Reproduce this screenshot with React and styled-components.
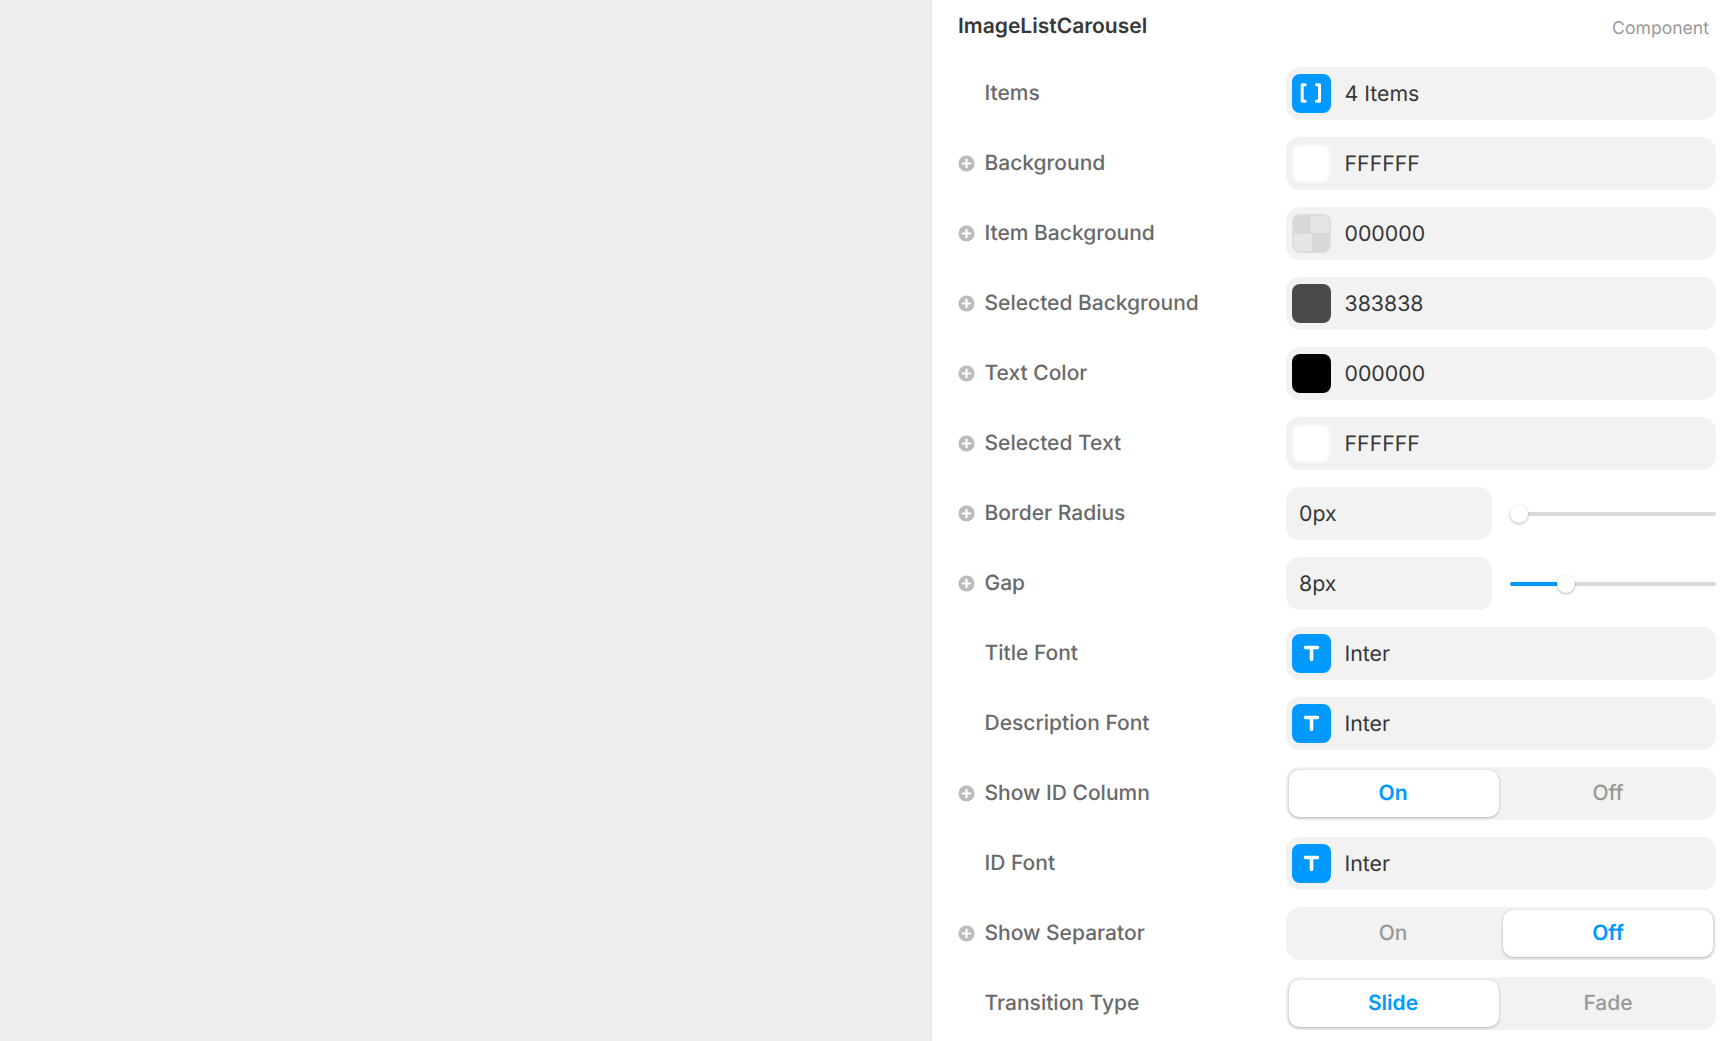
import styled, { createGlobalStyle } from "styled-components";

const GlobalStyle = createGlobalStyle`
  html, body {
    margin: 0;
    height: 100%;
    overflow: hidden;
    background: #eee;
    font-family: "Inter", "Liberation Sans", sans-serif;
    text-rendering: geometricPrecision;
  }
  #root { height: 100%; }
`;

const BLUE = "#0099ff";

const Page = styled.div`
  display: flex;
  height: 100vh;
`;

const Canvas = styled.div`
  flex: 1;
  background: #eee;
  border-right: 1px solid #e8e8e8;
`;

const Panel = styled.aside`
  width: 798px;
  box-sizing: border-box;
  padding: 0 14px 0 26px;
  background: #fff;
  display: flex;
  flex-direction: column;
`;

const Header = styled.header`
  height: 67px;
  display: flex;
  justify-content: space-between;
  align-items: flex-start;
  padding-top: 13px;
  box-sizing: border-box;
`;

const Title = styled.h1`
  margin: 0;
  font-size: 21px;
  line-height: 28px;
  font-weight: 600;
  color: #383838;
`;

const Kind = styled.span`
  font-size: 17.6px;
  line-height: 28px;
  margin: 2px 7px 0 0;
  color: #999;
`;

const Rows = styled.div`
  display: flex;
  flex-direction: column;
  gap: 17px;
`;

const Row = styled.div`
  display: grid;
  grid-template-columns: 328px 430px;
  height: 53px;
  align-items: center;
`;

const Label = styled.label`
  display: flex;
  align-items: center;
  font-size: 21px;
  font-weight: 500;
  color: #6a6a6a;
  padding-left: ${(p) => (p.$optional ? 0 : "26.5px")};
  gap: 10.5px;
`;

const PlusIcon = styled.svg`
  width: 17px;
  height: 17px;
  flex: none;
  margin-right: -1px;
`;

const Field = styled.div`
  height: 53px;
  box-sizing: border-box;
  display: flex;
  align-items: center;
  gap: 13.5px;
  padding-left: 6px;
  border-radius: 14px;
  background: #f2f2f2;
  font-size: 21.3px;
  color: #383838;
`;

const Swatch = styled.span`
  width: 39px;
  height: 39px;
  box-sizing: border-box;
  flex: none;
  border-radius: 8px;
  background: ${(p) => p.$color};
  border: ${(p) => (p.$edge ? `2px solid ${p.$edge}` : "none")};
`;

const CheckerSwatch = styled(Swatch)`
  background: conic-gradient(#e6e6e6 0 25%, #d8d8d8 0 50%, #e6e6e6 0 75%, #d8d8d8 0);
  border: 2px solid #dcdcdc;
`;

const IconTile = styled.svg`
  width: 39px;
  height: 39px;
  flex: none;
  border-radius: 8px;
  background: ${BLUE};
`;

const NumberRow = styled.div`
  display: grid;
  grid-template-columns: 206px 206px;
  column-gap: 18px;
  align-items: center;
`;

const NumberField = styled(Field)`
  padding-left: 13px;
`;

const Track = styled.div`
  position: relative;
  height: 4px;
  margin-top: 1px;
  border-radius: 2px;
  background: #dadada;
`;

const Fill = styled.div`
  height: 100%;
  border-radius: 2px;
  background: ${BLUE};
`;

const Thumb = styled.span`
  position: absolute;
  top: -7px;
  width: 18px;
  height: 18px;
  border-radius: 50%;
  background: #fff;
  box-shadow: 0 1px 3px rgba(0, 0, 0, 0.3);
`;

const Segments = styled.div`
  height: 53px;
  box-sizing: border-box;
  padding: 3px;
  display: grid;
  grid-template-columns: 1fr 1fr;
  column-gap: 4px;
  border-radius: 14px;
  background: #f2f2f2;
`;

const Segment = styled.div`
  height: 47px;
  box-sizing: border-box;
  display: flex;
  align-items: center;
  justify-content: center;
  border-radius: 10px;
  font-size: 21px;
  font-weight: ${(p) => (p.$active ? 600 : 500)};
  color: ${(p) => (p.$active ? BLUE : "#999")};
  background: ${(p) => (p.$active ? "#fff" : "transparent")};
  box-shadow: ${(p) =>
    p.$active ? "0 1px 3px rgba(0,0,0,0.25), 0 0 1px rgba(0,0,0,0.15)" : "none"};

  &:first-child {
    padding-right: 2px;
  }
`;

const Plus = () => (
  <PlusIcon viewBox="0 0 17 17">
    <circle cx="8.5" cy="8.5" r="8" fill="#bbb" />
    <path d="M8.5 4.7V12.3M4.7 8.5H12.3" stroke="#fff" strokeWidth="2.2" strokeLinecap="round" />
  </PlusIcon>
);

const BracketsIcon = () => (
  <IconTile viewBox="0 0 39 39">
    <path
      d="M13.2 10.8H10.2V27.2H13.2M24.5 10.8H27.5V27.2H24.5"
      fill="none"
      stroke="#fff"
      strokeWidth="3"
      strokeLinecap="round"
      strokeLinejoin="round"
    />
  </IconTile>
);

const FontIcon = () => (
  <IconTile viewBox="0 0 39 39">
    <path
      d="M13.5 13.5H25.5M19.5 13.5V25.5"
      fill="none"
      stroke="#fff"
      strokeWidth="3.6"
      strokeLinecap="round"
    />
  </IconTile>
);

const Slider = ({ percent }) => (
  <Track>
    <Fill style={{ width: `${percent}%` }} />
    <Thumb style={{ left: `${(percent / 100) * 206 - (percent ? 9 : 0)}px` }} />
  </Track>
);

const Toggle = ({ options, active }) => (
  <Segments>
    {options.map((o) => (
      <Segment key={o} $active={o === active}>
        {o}
      </Segment>
    ))}
  </Segments>
);

const ColorField = ({ value, color, edge, checker }) => (
  <Field>
    {checker ? <CheckerSwatch /> : <Swatch $color={color} $edge={edge} />}
    {value}
  </Field>
);

const FontField = () => (
  <Field>
    <FontIcon />
    Inter
  </Field>
);

const NumberControl = ({ value, percent }) => (
  <NumberRow>
    <NumberField>{value}</NumberField>
    <Slider percent={percent} />
  </NumberRow>
);

const PropRow = ({ label, optional, children }) => (
  <Row>
    <Label $optional={optional}>
      {optional && <Plus />}
      {label}
    </Label>
    {children}
  </Row>
);

export default function App() {
  return (
    <Page>
      <GlobalStyle />
      <Canvas />
      <Panel>
        <Header>
          <Title>ImageListCarousel</Title>
          <Kind>Component</Kind>
        </Header>
        <Rows>
          <PropRow label="Items">
            <Field>
              <BracketsIcon />
              4 Items
            </Field>
          </PropRow>
          <PropRow label="Background" optional>
            <ColorField value="FFFFFF" color="#fff" edge="#f6f6f6" />
          </PropRow>
          <PropRow label="Item Background" optional>
            <ColorField value="000000" checker />
          </PropRow>
          <PropRow label="Selected Background" optional>
            <ColorField value="383838" color="#4a4a4a" />
          </PropRow>
          <PropRow label="Text Color" optional>
            <ColorField value="000000" color="#000" />
          </PropRow>
          <PropRow label="Selected Text" optional>
            <ColorField value="FFFFFF" color="#fff" edge="#f6f6f6" />
          </PropRow>
          <PropRow label="Border Radius" optional>
            <NumberControl value="0px" percent={0} />
          </PropRow>
          <PropRow label="Gap" optional>
            <NumberControl value="8px" percent={27} />
          </PropRow>
          <PropRow label="Title Font">
            <FontField />
          </PropRow>
          <PropRow label="Description Font">
            <FontField />
          </PropRow>
          <PropRow label="Show ID Column" optional>
            <Toggle options={["On", "Off"]} active="On" />
          </PropRow>
          <PropRow label="ID Font">
            <FontField />
          </PropRow>
          <PropRow label="Show Separator" optional>
            <Toggle options={["On", "Off"]} active="Off" />
          </PropRow>
          <PropRow label="Transition Type">
            <Toggle options={["Slide", "Fade"]} active="Slide" />
          </PropRow>
        </Rows>
      </Panel>
    </Page>
  );
}
